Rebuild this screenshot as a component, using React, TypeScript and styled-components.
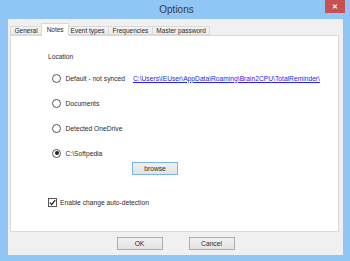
import { useState } from 'react';
import styled, { createGlobalStyle } from 'styled-components';

const GlobalStyle = createGlobalStyle`
  body {
    margin: 0;
    background: #8fc6f5;
    font-family: "Liberation Sans", Arial, sans-serif;
  }
`;

const Window = styled.div`
  width: 350px;
  height: 261px;
  box-sizing: border-box;
  background: #8fc6f5;
  display: flex;
  flex-direction: column;
`;

const TitleBar = styled.div`
  height: 19px;
  display: grid;
  grid-template-columns: 1fr auto 1fr;
  padding: 0 5px 0 8px;
`;

const Title = styled.div`
  grid-column: 2;
  font-size: 10px;
  line-height: 20px;
  color: #3a3a3a;
`;

const CloseButton = styled.div`
  justify-self: end;
  width: 20px;
  height: 13px;
  background: #c75050;
  color: #fff;
  font-size: 7px;
  font-weight: bold;
  line-height: 13px;
  text-align: center;
`;

const Client = styled.div`
  flex: 1;
  margin: 0 7px 6px 8px;
  background: #f0f0f0;
  padding: 0 4px 5px 2px;
  display: flex;
  flex-direction: column;
`;

const TabStrip = styled.div`
  height: 16px;
  display: flex;
  align-items: flex-end;
  padding-left: 1px;
`;

const Tab = styled.div<{ $active?: boolean }>`
  position: relative;
  box-sizing: border-box;
  height: ${(p) => (p.$active ? '13px' : '9px')};
  margin: ${(p) => (p.$active ? '0 -2px -1px -1px' : '0 0 0 -1px')};
  padding: ${(p) => (p.$active ? '1px 4.5px 0' : '0 3.5px')};
  border: 1px solid #d9d9d9;
  border-bottom: ${(p) => (p.$active ? 'none' : '1px solid #d9d9d9')};
  background: ${(p) => (p.$active ? '#ffffff' : 'linear-gradient(#f3f3f3, #ebebeb)')};
  z-index: ${(p) => (p.$active ? 2 : 1)};
  font-size: 6.5px;
  line-height: ${(p) => (p.$active ? '9px' : '8px')};
  color: #2a2a2a;
  white-space: nowrap;
`;

const Panel = styled.div`
  flex: 1;
  background: #ffffff;
  border: 1px solid #d9d9d9;
  padding: 17px 0 0 37px;
  display: flex;
  flex-direction: column;
  align-items: flex-start;
  font-size: 6.7px;
  color: #2a2a2a;
`;

const SectionLabel = styled.div`
  height: 8px;
  line-height: 8px;
`;

const RadioGroup = styled.div`
  margin-top: 12px;
  display: flex;
  flex-direction: column;
  gap: 15px;
  padding-left: 4px;
`;

const Row = styled.label`
  height: 10px;
  display: flex;
  align-items: center;
  gap: 4.5px;
  white-space: nowrap;
`;

const RadioCircle = styled.span<{ $checked?: boolean }>`
  width: 9px;
  height: 9px;
  box-sizing: border-box;
  border-radius: 50%;
  border: 1px solid #555;
  background: #fff;
  display: flex;
  align-items: center;
  justify-content: center;

  &::after {
    content: '';
    width: 4px;
    height: 4px;
    border-radius: 50%;
    background: ${(p) => (p.$checked ? '#222' : 'transparent')};
  }
`;

const PathLink = styled.span`
  margin-left: 3.5px;
  color: #2424f2;
  text-decoration: underline;
`;

const PushButton = styled.div<{ $focused?: boolean }>`
  width: 46px;
  height: 13px;
  box-sizing: border-box;
  border: 1px solid ${(p) => (p.$focused ? '#7ab4ec' : '#adadad')};
  background: linear-gradient(#f0f0f0, #e3e3e3);
  font-size: 6.7px;
  line-height: 11px;
  text-align: center;
  color: #2a2a2a;
`;

const BrowseWrap = styled.div`
  margin: 4px 0 0 84px;
`;

const CheckRow = styled.label`
  margin-top: 22px;
  height: 10px;
  display: flex;
  align-items: center;
  gap: 3px;
  white-space: nowrap;
`;

const CheckBox = styled.span`
  width: 9px;
  height: 9px;
  box-sizing: border-box;
  border: 1px solid #555;
  background: #fff;
  display: flex;
  align-items: center;
  justify-content: center;
`;

const Footer = styled.div`
  margin-top: 5px;
  display: flex;
  justify-content: center;
  gap: 26px;
  padding-left: 2px;
`;

const tabs = ['General', 'Notes', 'Event types', 'Frequencies', 'Master password'];

const locations = [
  { label: 'Default - not synced', path: 'C:\\Users\\IEUser\\AppData\\Roaming\\Brain2CPU\\TotalReminder\\' },
  { label: 'Documents' },
  { label: 'Detected OneDrive' },
  { label: 'C:\\Softpedia' },
];

export default function App() {
  const [selected, setSelected] = useState(3);

  return (
    <>
      <GlobalStyle />
      <Window>
        <TitleBar>
          <Title>Options</Title>
          <CloseButton>✕</CloseButton>
        </TitleBar>
        <Client>
          <TabStrip>
            {tabs.map((t) => (
              <Tab key={t} $active={t === 'Notes'}>
                {t}
              </Tab>
            ))}
          </TabStrip>
          <Panel>
            <SectionLabel>Location</SectionLabel>
            <RadioGroup>
              {locations.map((loc, i) => (
                <Row key={loc.label} onClick={() => setSelected(i)}>
                  <RadioCircle $checked={selected === i} />
                  {loc.label}
                  {loc.path && <PathLink>{loc.path}</PathLink>}
                </Row>
              ))}
            </RadioGroup>
            <BrowseWrap>
              <PushButton $focused>browse</PushButton>
            </BrowseWrap>
            <CheckRow>
              <CheckBox>
                <svg width="7" height="7" viewBox="0 0 7 7">
                  <path d="M0.8 3.6 L2.7 5.5 L6.2 1.2" fill="none" stroke="#222" strokeWidth="1.3" />
                </svg>
              </CheckBox>
              Enable change auto-detection
            </CheckRow>
          </Panel>
          <Footer>
            <PushButton>OK</PushButton>
            <PushButton>Cancel</PushButton>
          </Footer>
        </Client>
      </Window>
    </>
  );
}
